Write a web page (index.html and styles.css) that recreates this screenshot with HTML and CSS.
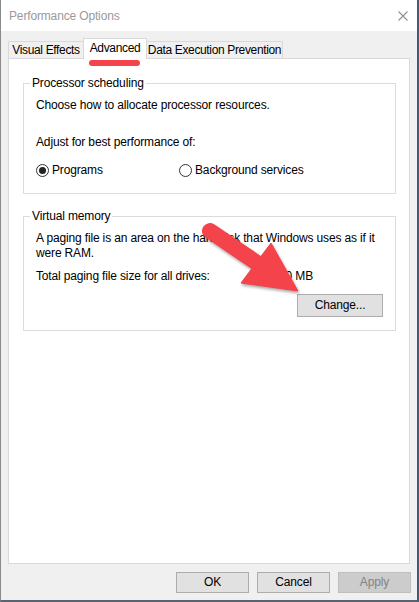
FILE: index.html
```html
<!DOCTYPE html>
<html>
<head>
<meta charset="utf-8">
<link rel="stylesheet" href="styles.css">
</head>
<body>
<div class="window">
  <div class="titlebar">
    <span class="title">Performance Options</span>
    <svg class="close" width="10" height="10" viewBox="0 0 10 10"><path d="M0.5 0.5 L9.5 9.5 M9.5 0.5 L0.5 9.5" stroke="#8f8f8f" stroke-width="1.1" fill="none"/></svg>
  </div>
  <div class="body">
    <div class="tabs">
      <div class="tab tab-ve">Visual Effects</div>
      <div class="tab tab-adv selected">Advanced<span class="mark"></span></div>
      <div class="tab tab-dep">Data Execution Prevention</div>
    </div>
    <div class="panel">
      <fieldset class="group g1">
        <legend>Processor scheduling</legend>
        <div class="content">
          <p class="line l1">Choose how to allocate processor resources.</p>
          <p class="line l2">Adjust for best performance of:</p>
          <div class="radios">
            <label class="radio r1"><span class="circle checked"></span>Programs</label>
            <label class="radio r2"><span class="circle"></span>Background services</label>
          </div>
        </div>
      </fieldset>
      <fieldset class="group g2">
        <legend>Virtual memory</legend>
        <div class="content">
          <p class="line l1">A paging file is an area on the hard disk that Windows uses as if it<br>were RAM.</p>
          <div class="total">
            <span class="total-label">Total paging file size for all drives:</span>
            <span class="total-value">1280 MB</span>
          </div>
          <div class="change-row"><button class="btn change">Change...</button></div>
        </div>
      </fieldset>
    </div>
    <div class="buttons">
      <button class="btn dlg">OK</button>
      <button class="btn dlg">Cancel</button>
      <button class="btn dlg disabled">Apply</button>
    </div>
  </div>
  <svg class="arrow" width="419" height="602" viewBox="0 0 419 602">
    <g class="arrow-shape">
      <line x1="210" y1="231" x2="257" y2="263" stroke="#f5434b" stroke-width="16" stroke-linecap="round"/>
      <polygon points="241,283 298,291 271,243" fill="#f5434b" stroke="#f5434b" stroke-width="1" stroke-linejoin="round"/>
    </g>
  </svg>
</div>
</body>
</html>
```

FILE: styles.css
```css
* { box-sizing: border-box; }
html, body { margin: 0; padding: 0; background: #ffffff; }
body {
  font-family: "Liberation Sans", Arial, sans-serif;
  font-size: 12px;
  letter-spacing: -0.15px;
  color: #000;
}
.window {
  position: relative;
  width: 419px;
  height: 602px;
  border-left: 1px solid #8a8a8a;
  border-right: 2px solid #3f5b78;
  border-bottom: 2px solid #5a6470;
  display: flex;
  flex-direction: column;
  overflow: hidden;
}
.titlebar {
  height: 31px;
  background: #fff;
  display: flex;
  align-items: center;
  padding-left: 8px;
  flex: none;
}
.title { color: #9a9a9a; font-size: 12px; line-height: 16px; flex: 1; }
.close { margin-right: 9px; display: block; }
.body {
  flex: 1;
  background: #f0f0f0;
  display: flex;
  flex-direction: column;
}
.tabs {
  display: flex;
  align-items: flex-end;
  padding-left: 7px;
  margin-top: 7px;
  height: 20px;
  flex: none;
  position: relative;
  z-index: 2;
}
.tab {
  height: 17px;
  border: 1px solid #d9d9d9;
  border-bottom: none;
  background: #f0f0f0;
  display: flex;
  align-items: center;
  justify-content: center;
  line-height: 15px;
  white-space: nowrap;
  padding-top: 1px;
  letter-spacing: -0.35px;
}
.tab-ve { width: 76px; }
.tab-adv { width: 64px; margin-left: -1px; }
.tab-dep { width: 137px; margin-left: -1px; }
.tab.selected {
  height: 21px;
  margin-bottom: -1px;
  background: #fff;
  position: relative;
  z-index: 3;
  padding-top: 0;
  padding-bottom: 2px;
}
.mark {
  position: absolute;
  left: 5px;
  top: 21px;
  width: 51px;
  height: 6px;
  border-radius: 3px;
  background: #f5434b;
}
.panel {
  height: 506px;
  margin: 0 7px 0 7px;
  background: #fff;
  border: 1px solid #d9d9d9;
  padding-top: 16px;
  flex: none;
  position: relative;
  z-index: 1;
}
.group {
  margin: 0 13px 0 14px;
  border: 1px solid #dcdcdc;
  padding: 0 12px 15px 6px;
  min-width: 0;
}
.group legend {
  padding: 0 2px;
  line-height: 16px;
  font-size: 12px;
}
.g2 { margin-top: 14px; padding-bottom: 13px; }
.content { padding-left: 6px; }
.line { margin: 0; line-height: 15px; white-space: nowrap; }
.l1 { margin-top: 7px; }
.l2 { margin-top: 22px; }
.radios {
  display: flex;
  margin-top: 12px;
  height: 16px;
  align-items: center;
}
.radio { display: flex; align-items: center; line-height: 15px; }
.r1 { width: 143px; }
.circle {
  width: 13px;
  height: 13px;
  border: 1px solid #333;
  border-radius: 50%;
  background: #fff;
  margin-right: 3px;
  display: flex;
  align-items: center;
  justify-content: center;
}
.circle.checked::after {
  content: "";
  width: 7px;
  height: 7px;
  border-radius: 50%;
  background: #222;
}
.total {
  display: grid;
  grid-template-columns: 197px 80px;
  margin-top: 8px;
  line-height: 15px;
  white-space: nowrap;
}
.total-value { text-align: right; }
.change-row {
  display: flex;
  justify-content: flex-end;
  margin-top: 10px;
}
.btn {
  font-family: "Liberation Sans", Arial, sans-serif;
  font-size: 12px;
  letter-spacing: -0.15px;
  color: #000;
  background: #e1e1e1;
  border: 1px solid #adadad;
  padding: 0;
  margin: 0;
  line-height: 15px;
}
.change { width: 86px; height: 23px; }
.buttons {
  display: flex;
  justify-content: flex-end;
  gap: 8px;
  margin-top: 8px;
  padding-right: 6px;
}
.dlg { width: 73px; height: 21px; }
.disabled { background: #cccccc; border-color: #bfbfbf; color: #838383; }
.arrow {
  position: absolute;
  left: -1px;
  top: 0;
  pointer-events: none;
  z-index: 5;
}
.arrow-shape { filter: drop-shadow(1px 2px 1.5px rgba(0,0,0,0.35)); }
```
